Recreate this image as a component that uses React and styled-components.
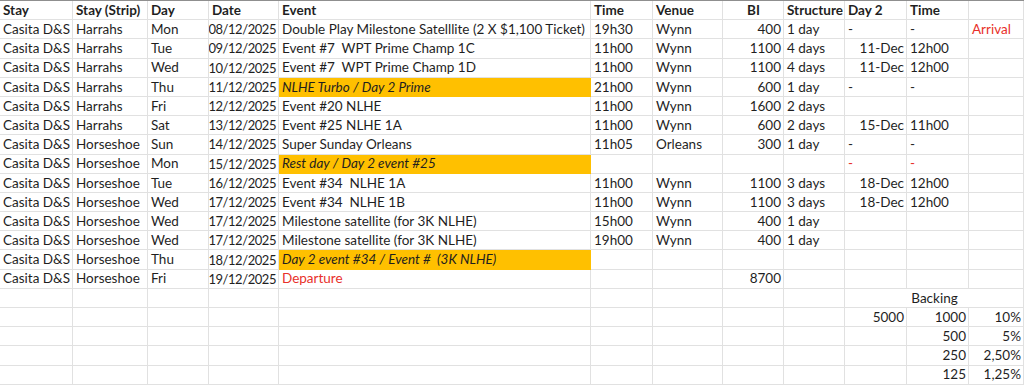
import React from "react"
import styled, { createGlobalStyle } from "styled-components"

const GlobalStyle = createGlobalStyle`
  html, body {
    margin: 0;
    padding: 0;
    background: #ffffff;
    overflow: hidden;
  }
  body {
    font-family: Lato, "Liberation Sans", sans-serif;
  }
`

const COLS = [73, 75, 61, 70, 312, 62, 70, 61, 61, 62, 62, 55]

const Sheet = styled.div`
  display: grid;
  grid-template-columns: ${COLS.map((w) => `${w}px`).join(" ")};
  grid-auto-rows: 19.2px;
  width: 1024px;
  border-top: 1px solid #8f8f8f;
  box-sizing: border-box;
  color: #1f1f1f;
  font-size: 13.5px;
`

const Cell = styled.div`
  grid-column: span ${(p) => p.$span || 1};
  box-sizing: border-box;
  border-right: 1px solid ${(p) => (p.$hl ? "#ffc000" : "#e1e1e1")};
  border-bottom: 1px solid ${(p) => (p.$hl ? "#ffc000" : "#e1e1e1")};
  background: ${(p) => (p.$hl ? "#ffc000" : "transparent")};
  padding: 1px 2px 0 3px;
  display: flex;
  align-items: center;
  justify-content: ${(p) =>
    p.$align === "right" ? "flex-end" : p.$align === "center" ? "center" : "flex-start"};
  font-weight: ${(p) => (p.$bold ? 700 : 400)};
  font-style: ${(p) => (p.$hl ? "italic" : "normal")};
  font-size: ${(p) => (p.$tight ? "13px" : "inherit")};
  letter-spacing: ${(p) => (p.$tight ? "-0.45px" : "normal")};
  color: ${(p) => (p.$red ? "#e8302a" : "inherit")};
  white-space: pre;
  overflow: hidden;
  line-height: 1;
`

// column alignment: which columns are right-aligned numbers
const RIGHT = { 3: true, 7: true, 9: true }

const header = ["Stay", "Stay (Strip)", "Day", "Date", "Event", "Time", "Venue", "BI", "Structure", "Day 2", "Time", ""]

const rows = [
  ["Harrahs", "Mon", "08/12/2025", "Double Play Milestone Satelllite (2 X $1,100 Ticket)", "19h30", "Wynn", "400", "1 day", "-", "-", { t: "Arrival", red: true }],
  ["Harrahs", "Tue", "09/12/2025", "Event #7  WPT Prime Champ 1C", "11h00", "Wynn", "1100", "4 days", "11-Dec", "12h00", ""],
  ["Harrahs", "Wed", "10/12/2025", "Event #7  WPT Prime Champ 1D", "11h00", "Wynn", "1100", "4 days", "11-Dec", "12h00", ""],
  ["Harrahs", "Thu", "11/12/2025", { t: "NLHE Turbo / Day 2 Prime", hl: true }, "21h00", "Wynn", "600", "1 day", "-", "-", ""],
  ["Harrahs", "Fri", "12/12/2025", "Event #20 NLHE", "11h00", "Wynn", "1600", "2 days", "", "", ""],
  ["Harrahs", "Sat", "13/12/2025", "Event #25 NLHE 1A", "11h00", "Wynn", "600", "2 days", "15-Dec", "11h00", ""],
  ["Horseshoe", "Sun", "14/12/2025", "Super Sunday Orleans", "11h05", "Orleans", "300", "1 day", "-", "-", ""],
  ["Horseshoe", "Mon", "15/12/2025", { t: "Rest day / Day 2 event #25", hl: true }, "", "", "", "", { t: "-", red: true }, { t: "-", red: true }, ""],
  ["Horseshoe", "Tue", "16/12/2025", "Event #34  NLHE 1A", "11h00", "Wynn", "1100", "3 days", "18-Dec", "12h00", ""],
  ["Horseshoe", "Wed", "17/12/2025", "Event #34  NLHE 1B", "11h00", "Wynn", "1100", "3 days", "18-Dec", "12h00", ""],
  ["Horseshoe", "Wed", "17/12/2025", "Milestone satellite (for 3K NLHE)", "15h00", "Wynn", "400", "1 day", "", "", ""],
  ["Horseshoe", "Wed", "17/12/2025", "Milestone satellite (for 3K NLHE)", "19h00", "Wynn", "400", "1 day", "", "", ""],
  ["Horseshoe", "Thu", "18/12/2025", { t: "Day 2 event #34 / Event #  (3K NLHE)", hl: true }, "", "", "", "", "", "", ""],
  ["Horseshoe", "Fri", "19/12/2025", { t: "Departure", red: true }, "", "", "8700", "", "", "", ""],
]

const backing = [
  ["5000", "1000", "10%"],
  ["", "500", "5%"],
  ["", "250", "2,50%"],
  ["", "125", "1,25%"],
]

const norm = (v) => (typeof v === "object" ? v : { t: v })

const App = () => {
  return (
    <>
      <GlobalStyle />
      <Sheet>
        {header.map((h, i) => (
          <Cell key={`h${i}`} $bold $align={i === 7 ? "center" : "left"}>
            {h}
          </Cell>
        ))}

        {rows.map((r, ri) =>
          ["Casita D&S", ...r].map((v, ci) => {
            const c = norm(v)
            // "-" placeholders stay left, real Day 2 dates sit right
            const right = RIGHT[ci] && c.t !== "-"
            return (
              <Cell
                key={`r${ri}c${ci}`}
                $align={right ? "right" : "left"}
                $hl={c.hl}
                $red={c.red}
                $tight={ci === 3}
              >
                {c.t}
              </Cell>
            )
          })
        )}

        {Array.from({ length: 9 }).map((_, i) => (
          <Cell key={`b0${i}`} />
        ))}
        <Cell $span={3} $align="center">
          Backing
        </Cell>

        {backing.map((b, bi) => (
          <React.Fragment key={`bk${bi}`}>
            {Array.from({ length: 9 }).map((_, i) => (
              <Cell key={`e${i}`} />
            ))}
            {b.map((v, i) => (
              <Cell key={`v${i}`} $align="right">
                {v}
              </Cell>
            ))}
          </React.Fragment>
        ))}
      </Sheet>
    </>
  )
}

export default App
